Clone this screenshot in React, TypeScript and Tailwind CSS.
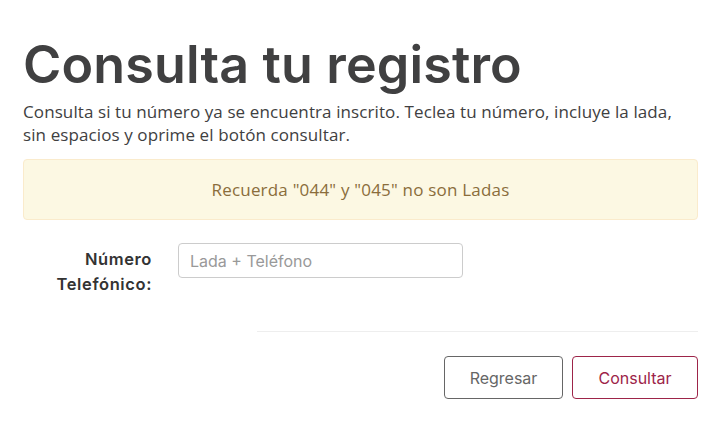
import React from 'react';

const heading = { fontFamily: '"Inter", "Noto Sans", sans-serif' };
const body = { fontFamily: '"Open Sans", "Noto Sans", sans-serif' };

export default function App() {
  return (
    <div className="min-h-[438px] bg-white text-[#404041]" style={body}>
      <div className="w-[675px] ml-[23px] pt-[33px]">
        <h1
          className="text-[52px] leading-[64px] font-semibold text-[#404041] tracking-[0.15px]"
          style={heading}
        >
          Consulta tu registro
        </h1>
        <p className="mt-[3px] max-w-[655px] text-[17px] leading-[23px] tracking-[0.1px] text-[#404041]">
          Consulta si tu número ya se encuentra inscrito. Teclea tu número, incluye la lada,
          sin espacios y oprime el botón consultar.
        </p>
        <div className="mt-[13px] h-[61px] flex items-center justify-center rounded border border-[#faebcc] bg-[#fcf8e3] text-[17px] tracking-[0.2px] text-[#8a6d3b]">
          Recuerda "044" y "045" no son Ladas
        </div>

        <div className="mt-[23px] flex items-start">
          <label
            className="w-[129px] pt-[4px] text-right text-[16.5px] leading-[25px] font-semibold text-[#333] tracking-[0.6px]"
            style={heading}
          >
            Número
            <br />
            Telefónico:
          </label>
          <input
            className="ml-[26px] w-[285px] h-[35px] rounded border border-[#ccc] px-[11px] text-[16px] placeholder:text-[#999] outline-none"
            placeholder="Lada + Teléfono"
            style={heading}
          />
        </div>

        <div className="mt-[34px] ml-[234px] border-t border-[#eee]" />

        <div className="mt-[24px] flex justify-end gap-[9px]">
          <button
            className="w-[119px] h-[43px] rounded border border-[#666] text-[16px] text-[#666] bg-white"
            style={heading}
          >
            Regresar
          </button>
          <button
            className="w-[126px] h-[43px] rounded border border-[#9d2449] text-[16px] text-[#9d2449] bg-white"
            style={heading}
          >
            Consultar
          </button>
        </div>
      </div>
    </div>
  );
}
